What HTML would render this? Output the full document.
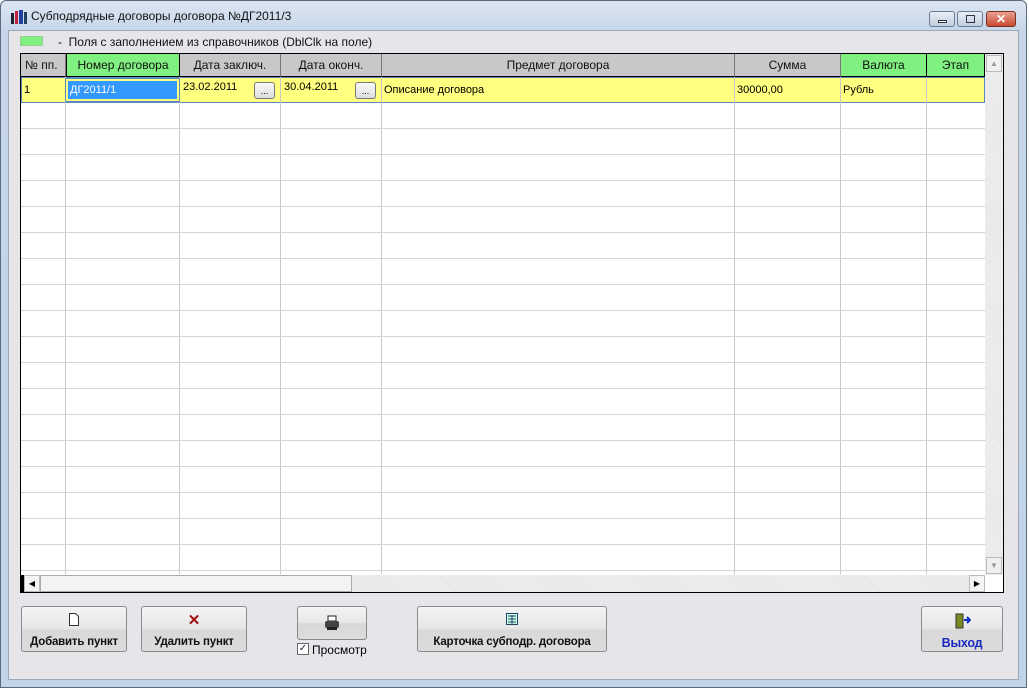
<!DOCTYPE html><html><head><meta charset="utf-8"><style>
*{box-sizing:border-box;margin:0;padding:0}
body{width:1029px;height:689px;overflow:hidden;background:#fff;font-family:"Liberation Sans",sans-serif;position:relative}
.frame{position:absolute;left:0;top:0;width:1027px;height:688px;border:1px solid #5a6a80;border-radius:6px 6px 0 0;background:linear-gradient(#dce6f2,#c6d6e8 30px,#c2d4e8);}
.content{position:absolute;left:8px;top:30px;width:1011px;height:650px;background:#e6e6ea;border:1px solid #9aa8b8}
.t{position:absolute;white-space:nowrap}
.grid{position:absolute;left:20px;top:53px;width:984px;height:540px;border:1px solid #000;background:#fff;overflow:hidden}
.hd{position:absolute;top:0;height:23px;background:#c8c8c8;border-right:1px solid #777;border-bottom:1px solid #000;font-size:12px;text-align:center;line-height:22px;color:#111}
.vl{position:absolute;top:23px;width:1px;height:497px;background:#c8c8c8}
.hl{position:absolute;left:0;width:964px;height:1px;background:#d4d4d4}
.btn{position:absolute;border:1px solid #8a8a8a;border-radius:3px;background:linear-gradient(#f4f4f4,#e6e6e6 50%,#d8d8d8 52%,#dcdcdc);font-size:12px;font-weight:bold;text-align:center;color:#111}
.btn .ic{position:absolute;left:0;right:0;top:6px;height:16px;line-height:16px}
.btn .lb{position:absolute;left:0;right:0;top:28px;line-height:14px;font-size:11.5px;letter-spacing:-0.2px}
.sb{position:absolute;background:repeating-linear-gradient(45deg,#f2f2f2 0 1px,#e4e4e4 1px 2px)}
.ctl{position:absolute;top:11px;height:16px;border:1px solid #6a7a90;border-radius:3px;background:linear-gradient(#e8eef6,#c0cede)}
</style></head><body>
<div class="frame"></div>
<svg style="position:absolute;left:10px;top:9px" width="18" height="16"><rect x="1" y="4" width="3" height="11" fill="#223"/><rect x="5" y="2" width="3" height="13" fill="#c02040"/><rect x="9" y="1" width="4" height="14" fill="#2040a0"/><rect x="14" y="3" width="3" height="12" fill="#204060"/></svg>
<div class="t" style="left:31px;top:9px;font-size:12px;color:#111">Субподрядные договоры договора №ДГ2011/3</div>
<div class="ctl" style="left:929px;width:26px"><div style="position:absolute;left:8px;top:8px;width:9px;height:3px;border:1px solid #334;background:#fff"></div></div>
<div class="ctl" style="left:957px;width:26px"><div style="position:absolute;left:8px;top:3px;width:9px;height:8px;border:1px solid #334"></div></div>
<div class="ctl" style="left:986px;width:30px;background:linear-gradient(#e8a090,#c84a30);border-color:#7a3020;color:#fff;font-weight:bold;font-size:12px;text-align:center;line-height:14px">✕</div>
<div class="content"></div>
<div style="position:absolute;left:20px;top:36px;width:23px;height:10px;background:#80f080;border:1px solid #9c9"></div>
<div class="t" style="left:58px;top:35px;font-size:12px;color:#111">-&nbsp; Поля с заполнением из справочников (DblClk на поле)</div>
<div class="grid">
<div class="hd" style="left:0;width:45px;text-align:left;padding-left:4px">№ пп.</div>
<div class="hd" style="left:45px;width:114px;background:#80f080;border:1px solid #000;border-top:0">Номер договора</div>
<div class="hd" style="left:159px;width:101px">Дата заключ.</div>
<div class="hd" style="left:260px;width:101px">Дата оконч.</div>
<div class="hd" style="left:361px;width:353px">Предмет договора</div>
<div class="hd" style="left:714px;width:106px">Сумма</div>
<div class="hd" style="left:820px;width:86px;background:#80f080;border-right:1px solid #000">Валюта</div>
<div class="hd" style="left:906px;width:58px;background:#80f080;border-right:1px solid #000">Этап</div>
<div style="position:absolute;left:0;top:23px;width:964px;height:26px;background:#ffff80;border:1px solid #5a8ac0"></div>
<div class="vl" style="left:44px"></div><div class="vl" style="left:158px"></div><div class="vl" style="left:259px"></div><div class="vl" style="left:360px"></div><div class="vl" style="left:713px"></div><div class="vl" style="left:819px"></div><div class="vl" style="left:905px"></div>
<div class="hl" style="top:74px"></div><div class="hl" style="top:100px"></div><div class="hl" style="top:126px"></div><div class="hl" style="top:152px"></div><div class="hl" style="top:178px"></div><div class="hl" style="top:204px"></div><div class="hl" style="top:230px"></div><div class="hl" style="top:256px"></div><div class="hl" style="top:282px"></div><div class="hl" style="top:308px"></div><div class="hl" style="top:334px"></div><div class="hl" style="top:360px"></div><div class="hl" style="top:386px"></div><div class="hl" style="top:412px"></div><div class="hl" style="top:438px"></div><div class="hl" style="top:464px"></div><div class="hl" style="top:490px"></div><div class="hl" style="top:516px"></div>
<div class="t" style="left:3px;top:30px;font-size:11px">1</div>
<div style="position:absolute;left:45px;top:25px;width:113px;height:22px;border:2px solid #ffff80;outline:1px solid #5a8ac0;background:#3399ff;color:#fff;font-size:11px;line-height:18px;padding-left:2px">ДГ2011/1</div>
<div class="t" style="left:162px;top:27px;font-size:11px">23.02.2011</div>
<div style="position:absolute;left:233px;top:28px;width:21px;height:17px;border:1px solid #777;border-radius:3px;background:linear-gradient(#fafafa,#ddd);font-size:9px;text-align:center;line-height:16px">...</div>
<div class="t" style="left:263px;top:27px;font-size:11px">30.04.2011</div>
<div style="position:absolute;left:334px;top:28px;width:21px;height:17px;border:1px solid #777;border-radius:3px;background:linear-gradient(#fafafa,#ddd);font-size:9px;text-align:center;line-height:16px">...</div>
<div class="t" style="left:363px;top:30px;font-size:11px">Описание договора</div>
<div class="t" style="left:716px;top:30px;font-size:11px">30000,00</div>
<div class="t" style="left:822px;top:30px;font-size:11px">Рубль</div>
<div class="sb" style="left:964px;top:0;width:18px;height:521px"></div>
<div style="position:absolute;left:965px;top:1px;width:16px;height:17px;border:1px solid #bbb;background:#f0f0f0;font-size:8px;color:#999;text-align:center;line-height:15px">▲</div>
<div style="position:absolute;left:965px;top:503px;width:16px;height:17px;border:1px solid #bbb;background:#f0f0f0;font-size:8px;color:#999;text-align:center;line-height:15px">▼</div>
<div class="sb" style="left:0;top:521px;width:964px;height:17px"></div>
<div style="position:absolute;left:0;top:521px;width:3px;height:17px;background:#000"></div>
<div style="position:absolute;left:3px;top:521px;width:16px;height:17px;border:1px solid #bbb;background:#f4f4f4;font-size:8px;text-align:center;line-height:15px">◀</div>
<div style="position:absolute;left:19px;top:521px;width:312px;height:17px;border:1px solid #aaa;background:#f4f4f4"></div>
<div style="position:absolute;left:948px;top:521px;width:16px;height:17px;border:1px solid #bbb;background:#f4f4f4;font-size:8px;text-align:center;line-height:15px">▶</div>
</div>
<div class="btn" style="left:21px;top:606px;width:106px;height:46px"><div class="ic"><svg width="10" height="13"><path d="M0.5 0.5h6l3 3v9h-9z" fill="#fff" stroke="#333"/></svg></div><div class="lb">Добавить пункт</div></div>
<div class="btn" style="left:141px;top:606px;width:106px;height:46px"><div class="ic" style="color:#a01010;font-size:15px">✕</div><div class="lb">Удалить пункт</div></div>
<div class="btn" style="left:297px;top:606px;width:70px;height:34px"><svg style="margin-top:8px" width="18" height="16"><rect x="5" y="1" width="8" height="5" fill="#fff" stroke="#222"/><rect x="2" y="6" width="14" height="7" fill="#444" rx="2"/><rect x="4" y="12" width="10" height="3" fill="#222"/></svg></div>
<div style="position:absolute;left:297px;top:643px;width:12px;height:12px;border:1px solid #666;background:#fff;font-size:10px;line-height:10px;text-align:center;color:#224">✓</div>
<div class="t" style="left:312px;top:643px;font-size:12px">Просмотр</div>
<div class="btn" style="left:417px;top:606px;width:190px;height:46px"><div class="ic"><svg width="12" height="12"><rect x="0.5" y="0.5" width="11" height="11" fill="#cfe" stroke="#246"/><path d="M2 3h8M2 6h8M2 9h8M6 2v9" stroke="#246"/></svg></div><div class="lb">Карточка субподр. договора</div></div>
<div class="btn" style="left:921px;top:606px;width:82px;height:46px"><div class="ic"><svg width="18" height="16"><rect x="3" y="1" width="7" height="14" fill="#7a8a20" stroke="#333"/><path d="M11 7h6M14 4l3 3-3 3" stroke="#1030c0" stroke-width="2" fill="none"/></svg></div><div class="lb" style="color:#1a2ac0;font-size:12.5px;top:29px">Выход</div></div>
</body></html>
